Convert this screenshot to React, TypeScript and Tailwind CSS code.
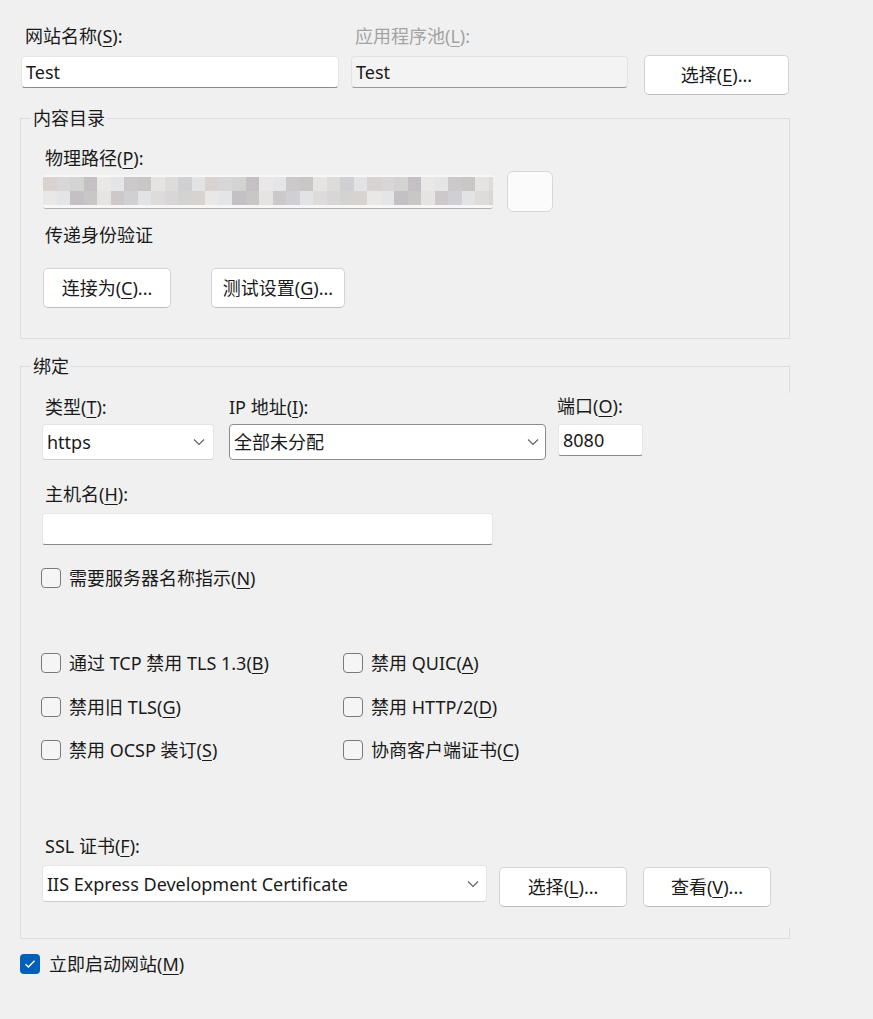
import React from 'react';

// 马赛克色块 (物理路径已打码)
const mosaic = [
  'bg-[#d8d2d0]', 'bg-[#e4e5e7]', 'bg-[#c9c7c6]', 'bg-[#dedcdb]', 'bg-[#d3d3d1]',
  'bg-[#e9e8e7]', 'bg-[#cdc8c9]', 'bg-[#e1e3e4]', 'bg-[#d9d6d7]', 'bg-[#c4c0c4]',
  'bg-[#e6e4e2]', 'bg-[#d0cfd3]',
];

const Key: React.FC<{ k: string }> = ({ k }) => (
  <span>(<u className="underline-offset-[3px]">{k}</u>)</span>
);

const Chevron: React.FC = () => (
  <svg width="12" height="8" viewBox="0 0 12 8" fill="none" className="shrink-0">
    <path d="M1 1.5 L6 6.5 L11 1.5" stroke="#5f5f5f" strokeWidth="1.1" />
  </svg>
);

const Btn: React.FC<{ children: React.ReactNode; className?: string }> = ({ children, className }) => (
  <button className={`h-[40px] bg-white border border-[#d3d3d3] border-b-[#bdbdbd] rounded-[5px] flex items-center justify-center ${className ?? ''}`}>
    {children}
  </button>
);

const Check: React.FC<{ label: React.ReactNode; checked?: boolean; className?: string }> = ({ label, checked, className }) => (
  <div className={`flex items-center h-[24px] ${className ?? ''}`}>
    {checked ? (
      <div className="w-[20px] h-[20px] rounded-[4px] bg-[#005fb8] flex items-center justify-center">
        <svg width="12" height="10" viewBox="0 0 12 10" fill="none">
          <path d="M1.5 5.2 L4.4 8 L10.5 1.8" stroke="white" strokeWidth="1.4" />
        </svg>
      </div>
    ) : (
      <div className="w-[20px] h-[20px] rounded-[4px] border border-[#7a7a7a] bg-[#f5f5f5]" />
    )}
    <span className={checked ? 'ml-[9px]' : 'ml-[8px]'}>{label}</span>
  </div>
);

const App: React.FC = () => {
  return (
    <div
      className="min-h-screen w-[873px] bg-[#f0f0f0] text-[18px] leading-[24px] text-[#1a1a1a]"
      style={{ fontFamily: '"Noto Sans", "Noto Sans CJK SC", sans-serif' }}
    >
      <div className="pl-[20px] pt-[24px] w-[790px]">
        {/* 顶部: 网站名称 / 应用程序池 */}
        <div className="flex items-end">
          <div className="w-[318px] ml-[1px]">
            <div className="pl-[4px] mb-[8px]">网站名称<Key k="S" />:</div>
            <div className="h-[32px] bg-white border border-[#e6e6e6] border-b-[#8a8a8a] rounded-[4px] flex items-center pl-[4px]">Test</div>
          </div>
          <div className="w-[277px] ml-[12px]">
            <div className="pl-[4px] mb-[8px] text-[#a3a3a3]">应用程序池<Key k="L" />:</div>
            <div className="h-[32px] bg-[#f3f3f3] border border-[#e2e2e2] border-b-[#9a9a9a] rounded-[4px] flex items-center pl-[4px] mb-0">Test</div>
          </div>
          <Btn className="w-[145px] ml-[16px] mb-[-7px]">选择<Key k="E" />...</Btn>
        </div>

        {/* 内容目录 */}
        <fieldset className="mt-[18px] border border-[#dcdcdc] pl-[22px] pb-[30px]">
          <legend className="-ml-[12px] px-[2px]">内容目录</legend>
          <div className="pt-[16px] pl-[2px]">物理路径<Key k="P" />:</div>
          <div className="flex items-center mt-[1px]">
            <div className="w-[450px] h-[34px] bg-[#f7f7f7] rounded-[3px] border-b border-[#b0b0b0] flex flex-col justify-center overflow-hidden">
              {[0, 1].map((r) => (
                <div key={r} className="flex h-[14px]">
                  {Array.from({ length: 34 }).map((_, i) => (
                    <div key={i} className={`w-[13.5px] h-[14px] shrink-0 ${mosaic[(i * 7 + r * 5 + (i % 3)) % mosaic.length]}`} />
                  ))}
                </div>
              ))}
            </div>
            <div className="ml-[14px] w-[46px] h-[41px] bg-[#fbfbfb] border border-[#d8d8d8] rounded-[6px]" />
          </div>
          <div className="mt-[11px] pl-[2px]">传递身份验证</div>
          <div className="flex mt-[21px]">
            <Btn className="w-[128px]">连接为<Key k="C" />...</Btn>
            <Btn className="w-[134px] ml-[40px]">测试设置<Key k="G" />...</Btn>
          </div>
        </fieldset>

        {/* 绑定 */}
        <fieldset className="relative mt-[15px] border border-r-0 border-[#dcdcdc] pl-[21px] pb-[31px]">
          <legend className="-ml-[11px] px-[2px]">绑定</legend>
          <div className="absolute right-0 top-[-13px] w-px h-[28px] bg-[#dcdcdc]" />
          <div className="absolute right-0 bottom-[-1px] w-px h-[11px] bg-[#dcdcdc]" />

          <div className="flex pt-[17px]">
            <div className="w-[172px]">
              <div className="pl-[3px]">类型<Key k="T" />:</div>
              <div className="mt-[5px] h-[36px] bg-white border border-[#e3e3e3] border-b-[#cfcfcf] rounded-[4px] flex items-center justify-between pl-[4px] pr-[8px]">
                <span>https</span>
                <Chevron />
              </div>
            </div>
            <div className="w-[317px] ml-[15px]">
              <div>IP 地址<Key k="I" />:</div>
              <div className="mt-[5px] h-[36px] bg-white border border-[#8c8c8c] rounded-[4px] flex items-center justify-between pl-[4px] pr-[6px]">
                <span>全部未分配</span>
                <Chevron />
              </div>
            </div>
            <div className="w-[85px] ml-[12px]">
              <div className="mt-[-1px] -ml-[1px]">端口<Key k="O" />:</div>
              <div className="mt-[6px] h-[32px] bg-white border border-[#e6e6e6] border-b-[#8a8a8a] rounded-[3px] flex items-center pl-[4px]">8080</div>
            </div>
          </div>

          <div className="mt-[22px] pl-[3px]">主机名<Key k="H" />:</div>
          <div className="mt-[7px] w-[451px] h-[32px] bg-white border border-[#e6e6e6] border-b-[#8a8a8a] rounded-[3px]" />

          <Check className="mt-[21px] -ml-[1px]" label={<>需要服务器名称指示<Key k="N" /></>} />

          <div className="mt-[61px] -ml-[1px] grid grid-cols-[302px_1fr] gap-y-[19.5px]">
            <Check label={<>通过 TCP 禁用 TLS 1.3<Key k="B" /></>} />
            <Check label={<>禁用 QUIC<Key k="A" /></>} />
            <Check label={<>禁用旧 TLS<Key k="G" /></>} />
            <Check label={<>禁用 HTTP/2<Key k="D" /></>} />
            <Check label={<>禁用 OCSP 装订<Key k="S" /></>} />
            <Check label={<>协商客户端证书<Key k="C" /></>} />
          </div>

          <div className="mt-[72px] pl-[3px]">SSL 证书<Key k="F" />:</div>
          <div className="flex items-start mt-[7px]">
            <div className="w-[445px] h-[37px] bg-white border border-[#e3e3e3] border-b-[#cfcfcf] rounded-[4px] flex items-center justify-between pl-[4px] pr-[7px]">
              <span>IIS Express Development Certificate</span>
              <Chevron />
            </div>
            <Btn className="w-[128px] ml-[12px] mt-[2px]">选择<Key k="L" />...</Btn>
            <Btn className="w-[128px] ml-[16px] mt-[2px]">查看<Key k="V" />...</Btn>
          </div>
        </fieldset>

        <Check checked className="mt-[13px]" label={<>立即启动网站<Key k="M" /></>} />
      </div>
    </div>
  );
};

export default App;
